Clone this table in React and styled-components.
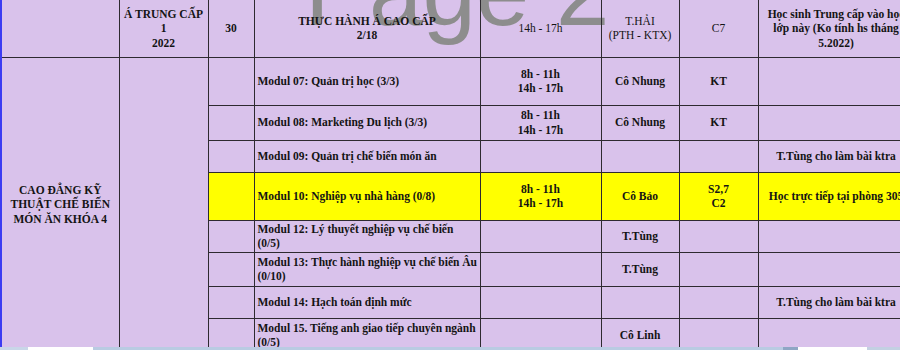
import React from "react";
import styled, { createGlobalStyle } from "styled-components";

const GlobalStyle = createGlobalStyle`
  html, body {
    margin: 0;
    padding: 0;
    background: #d9c2eb;
    overflow: hidden;
  }
`;

const Screen = styled.div`
  width: 900px;
  height: 350px;
  display: flex;
  flex-direction: column;
  overflow: hidden;
  font-family: "Liberation Serif", "DejaVu Serif Condensed", serif;
  color: #141414;
`;

const Sheet = styled.div`
  position: relative;
  flex: 1;
  overflow: hidden;
  border-left: 2px solid #3c3cf2;
  background: #d9c2eb;
`;

const Grid = styled.table`
  position: relative;
  z-index: 1;
  table-layout: fixed;
  border-collapse: collapse;
  width: 912px;
  font-size: 11.5px;
  line-height: 14.5px;

  tr:first-child > td {
    border-top: 0;
  }
  td:first-child {
    border-left: 0;
  }
`;

const Row = styled.tr`
  height: ${(p) => p.$h}px;
`;

const Cell = styled.td`
  border: 1px solid #2e2a30;
  padding: 0 3px;
  vertical-align: middle;
  text-align: ${(p) => p.$align || "center"};
  font-weight: ${(p) => (p.$light ? 400 : 700)};
  background: ${(p) => (p.$hl ? "#ffff00" : "transparent")};
  white-space: nowrap;
  overflow: hidden;
`;

const Watermark = styled.div`
  position: absolute;
  z-index: 0;
  left: 303px;
  top: -56px;
  font-family: "Liberation Sans", Arial, sans-serif;
  font-size: 96px;
  line-height: 1;
  color: #8d8d8d;
  pointer-events: none;
  white-space: nowrap;
`;

const ScrollStrip = styled.div`
  height: 3px;
  display: flex;
  background: #b9cbe2;
`;

const StripPiece = styled.div`
  width: ${(p) => p.$w}px;
  background: ${(p) => p.$c};
`;

const Lines = ({ text }) =>
  [].concat(text).map((line, i) => (
    <React.Fragment key={i}>
      {i > 0 && <br />}
      {line}
    </React.Fragment>
  ));

const TIME = ["8h - 11h", "14h - 17h"];

const modules = [
  { h: 48, name: "Modul 07: Quản trị học (3/3)", time: TIME, teacher: "Cô Nhung", room: "KT", note: "" },
  { h: 35, name: "Modul 08: Marketing Du lịch (3/3)", time: TIME, teacher: "Cô Nhung", room: "KT", note: "" },
  { h: 32, name: "Modul 09: Quản trị chế biến món ăn", time: "", teacher: "", room: "", note: "T.Tùng cho làm bài ktra" },
  {
    h: 48,
    name: "Modul 10: Nghiệp vụ nhà hàng (0/8)",
    time: TIME,
    teacher: "Cô Bảo",
    room: ["S2,7", "C2"],
    note: "Học trực tiếp tại phòng 305",
    hl: true,
  },
  { h: 32, name: ["Modul 12: Lý thuyết nghiệp vụ chế biến", "(0/5)"], time: "", teacher: "T.Tùng", room: "", note: "" },
  { h: 34, name: ["Modul 13: Thực hành nghiệp vụ chế biến Âu", "(0/10)"], time: "", teacher: "T.Tùng", room: "", note: "" },
  { h: 32, name: "Modul 14: Hạch toán định mức", time: "", teacher: "", room: "", note: "T.Tùng cho làm bài ktra" },
  { h: 34, name: ["Modul 15. Tiếng anh giao tiếp chuyên ngành", "(0/5)"], time: "", teacher: "Cô Linh", room: "", note: "" },
];

const colWidths = [117, 89, 46, 226, 121, 78, 79, 156];

export default function App() {
  return (
    <>
      <GlobalStyle />
      <Screen>
        <Sheet>
          <Grid>
            <colgroup>
              {colWidths.map((w, i) => (
                <col key={i} style={{ width: w }} />
              ))}
            </colgroup>
            <tbody>
              <Row $h={57}>
                <Cell />
                <Cell>
                  <Lines text={["Á TRUNG CẤP", "1", "2022"]} />
                </Cell>
                <Cell>30</Cell>
                <Cell>
                  <Lines text={["THỰC HÀNH Á CAO CẤP", "2/18"]} />
                </Cell>
                <Cell $light>14h - 17h</Cell>
                <Cell $light>
                  <Lines text={["T.HẢI", "(PTH - KTX)"]} />
                </Cell>
                <Cell $light>C7</Cell>
                <Cell>
                  <Lines text={["Học sinh Trung cấp vào học", "lớp này (Ko tính hs tháng", "5.2022)"]} />
                </Cell>
              </Row>
              {modules.map((m, i) => (
                <Row key={i} $h={m.h}>
                  {i === 0 && (
                    <>
                      <Cell rowSpan={modules.length}>
                        <Lines text={["CAO ĐẲNG KỸ", "THUẬT CHẾ BIẾN", "MÓN ĂN KHÓA 4"]} />
                      </Cell>
                      <Cell rowSpan={modules.length} />
                    </>
                  )}
                  <Cell $hl={m.hl} />
                  <Cell $hl={m.hl} $align="left">
                    <Lines text={m.name} />
                  </Cell>
                  <Cell $hl={m.hl}>
                    <Lines text={m.time} />
                  </Cell>
                  <Cell $hl={m.hl}>
                    <Lines text={m.teacher} />
                  </Cell>
                  <Cell $hl={m.hl}>
                    <Lines text={m.room} />
                  </Cell>
                  <Cell $hl={m.hl}>
                    <Lines text={m.note} />
                  </Cell>
                </Row>
              ))}
            </tbody>
          </Grid>
          <Watermark>Page 2</Watermark>
        </Sheet>
        <ScrollStrip>
          <StripPiece $w={28} $c="#c9d6e8" />
          <StripPiece $w={65} $c="#ffffff" />
          <StripPiece $w={690} $c="#b9cbe2" />
          <StripPiece $w={15} $c="#8fa6c4" />
          <StripPiece $w={69} $c="#ffffff" />
          <StripPiece $w={33} $c="#c3d0e2" />
        </ScrollStrip>
      </Screen>
    </>
  );
}
